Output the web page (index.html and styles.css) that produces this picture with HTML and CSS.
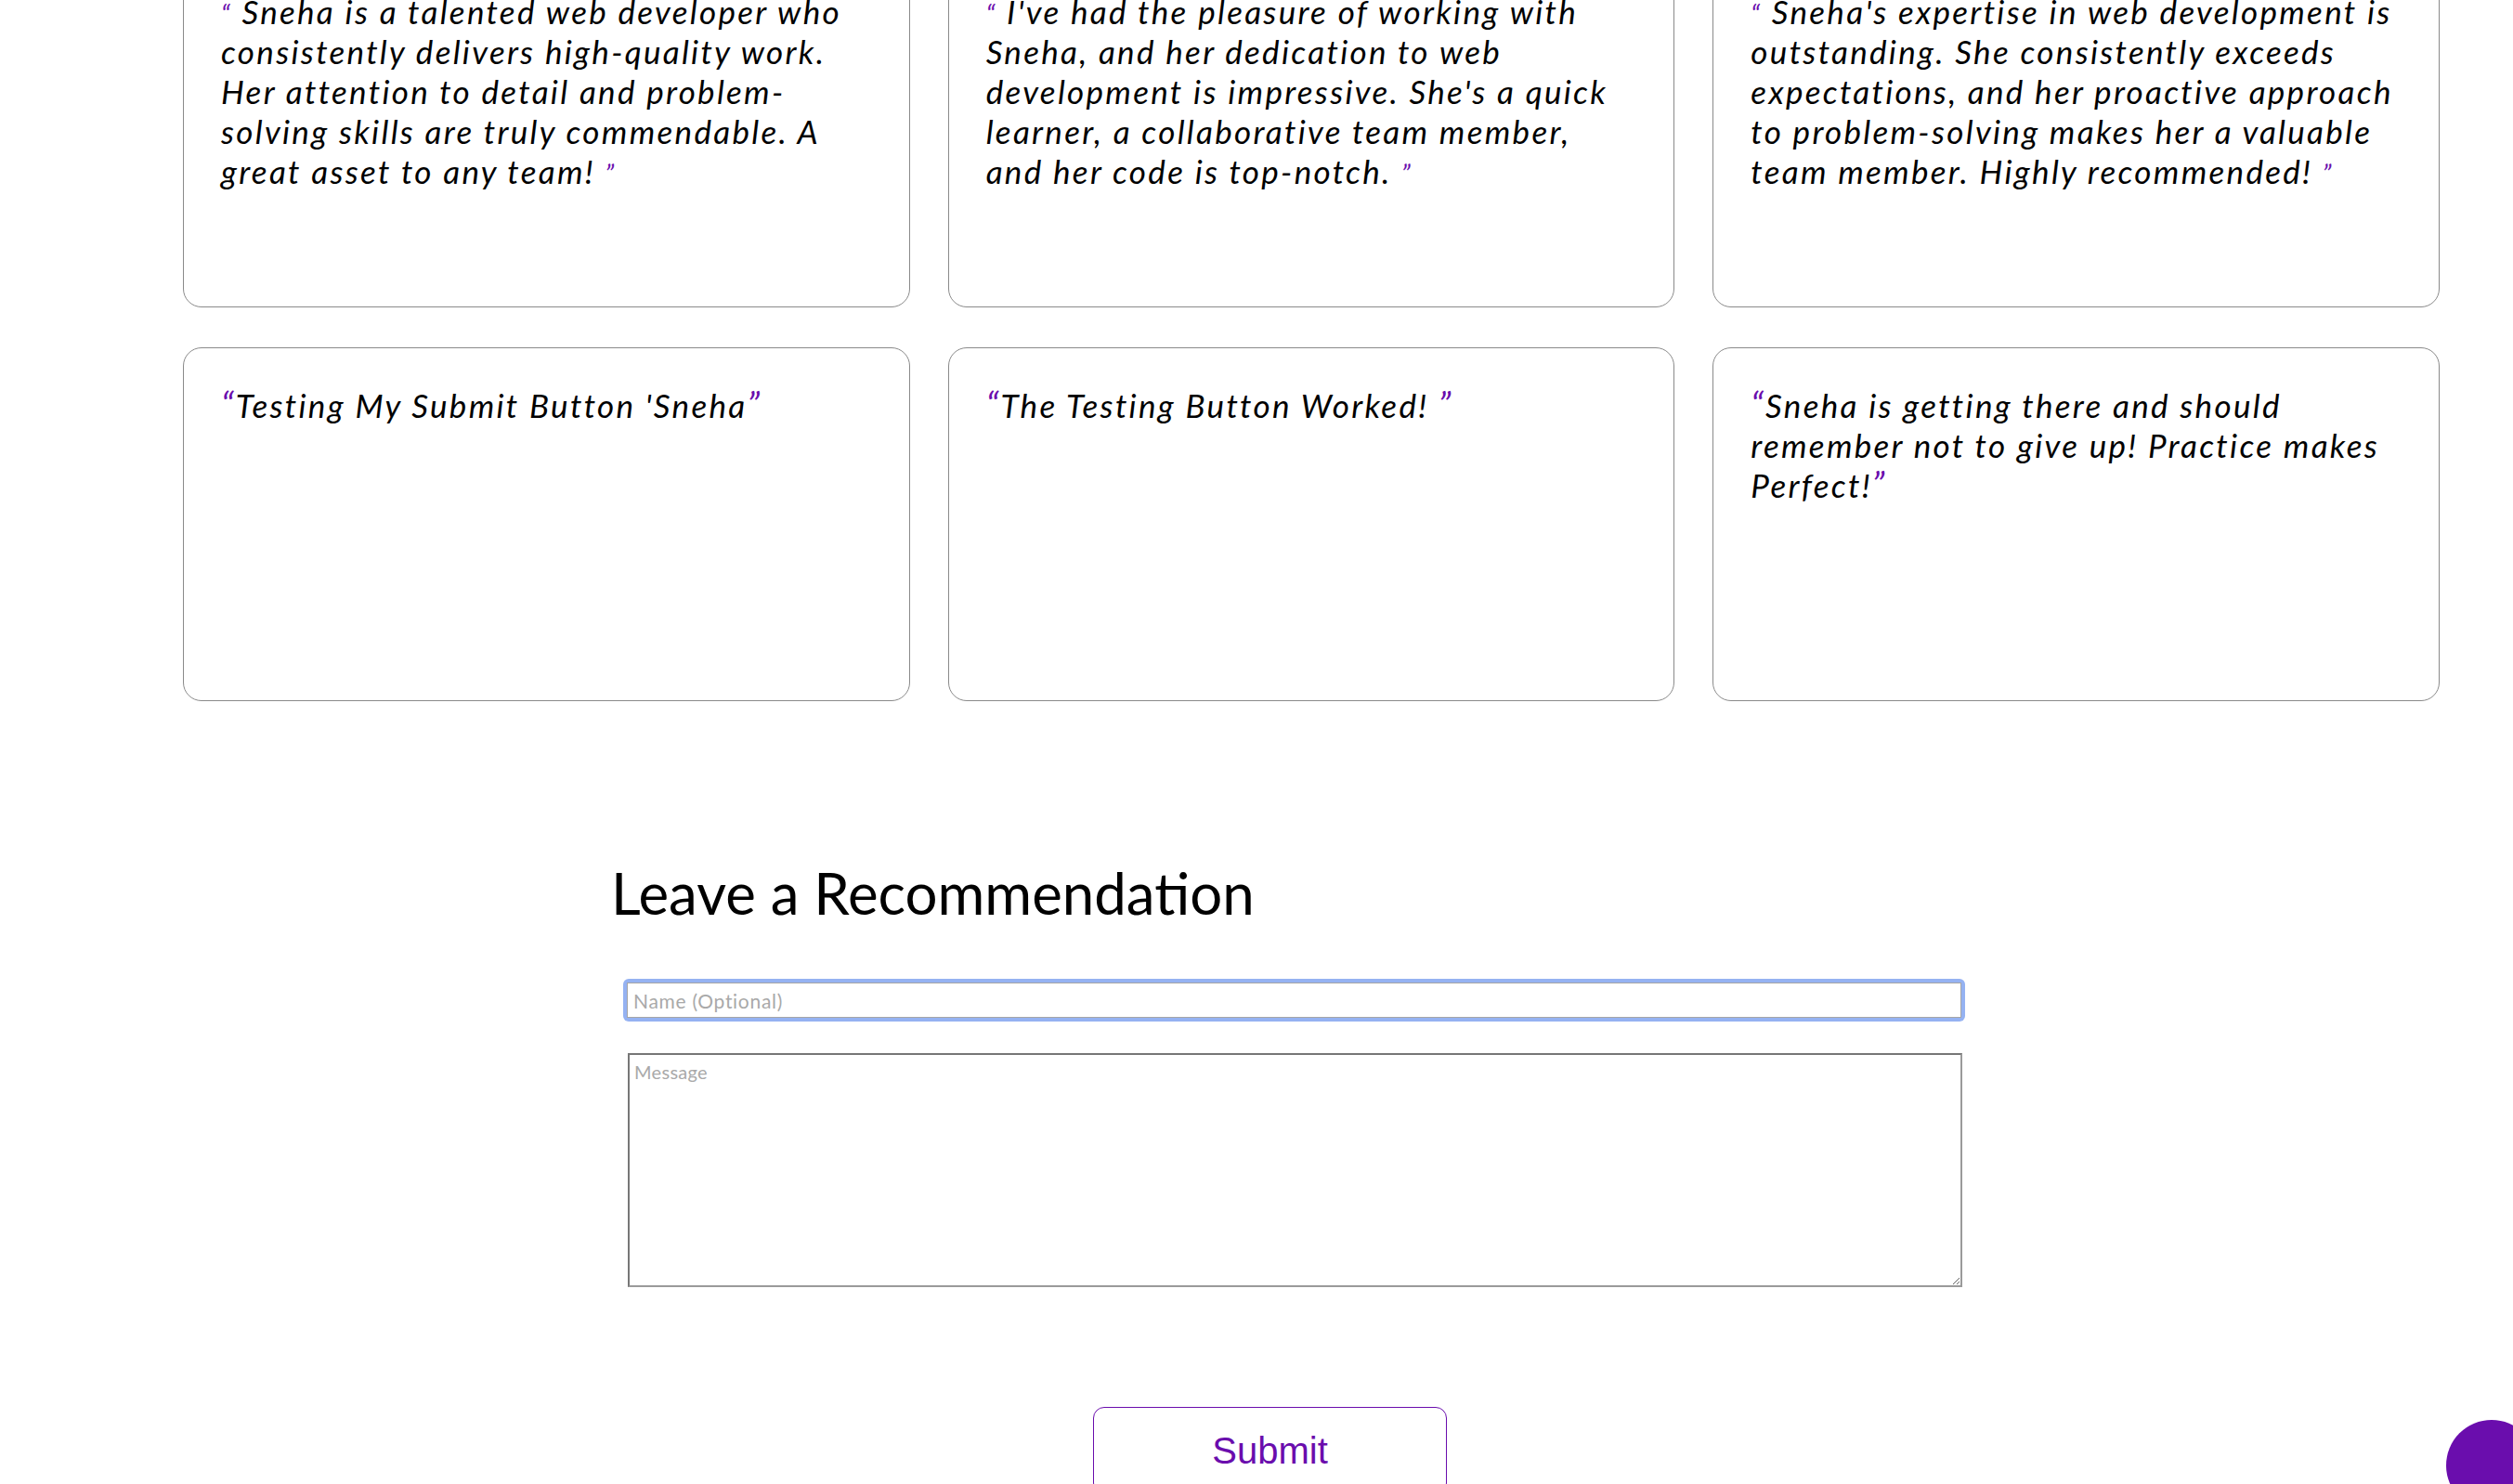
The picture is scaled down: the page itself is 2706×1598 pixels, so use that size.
FILE: index.html
```html
<!DOCTYPE html>
<html lang="en">
<head>
<meta charset="utf-8">
<title>Recommendations</title>
<link rel="stylesheet" href="styles.css">
</head>
<body>
<section class="testimonials">
  <div class="card"><p class="quote-text"><span class="q q-small">“</span> Sneha is a talented web developer who consistently delivers high-quality work. Her attention to detail and problem-solving skills are truly commendable. A great asset to any team! <span class="q q-small">”</span></p></div>
  <div class="card"><p class="quote-text"><span class="q q-small">“</span> I've had the pleasure of working with Sneha, and her dedication to web development is impressive. She's a quick learner, a collaborative team member, and her code is top-notch. <span class="q q-small">”</span></p></div>
  <div class="card"><p class="quote-text"><span class="q q-small">“</span> Sneha's expertise in web development is outstanding. She consistently exceeds expectations, and her proactive approach to problem-solving makes her a valuable team member. Highly recommended! <span class="q q-small">”</span></p></div>
  <div class="card"><p class="quote-text"><span class="q">“</span>Testing My Submit Button 'Sneha<span class="q">”</span></p></div>
  <div class="card"><p class="quote-text"><span class="q">“</span>The Testing Button Worked! <span class="q">”</span></p></div>
  <div class="card"><p class="quote-text"><span class="q">“</span>Sneha is getting there and should remember not to give up! Practice makes Perfect!<span class="q">”</span></p></div>
</section>

<section class="recommend">
  <h2 class="recommend-title">Leave a Recommendation</h2>
  <form class="recommend-form" onsubmit="return false">
    <div class="focus-ring"><input class="field-input" type="text" placeholder="Name (Optional)" autofocus></div>
    <textarea class="field-message" placeholder="Message"></textarea>
    <button class="submit-btn" type="submit">Submit</button>
  </form>
</section>

<a class="to-top" href="#" aria-label="Back to top"></a>
</body>
</html>
```

FILE: styles.css
```css
html {
  overflow: hidden;
}

body {
  margin: 0;
  background: #ffffff;
  color: #000000;
  font-family: Lato, "Open Sans", sans-serif;
}

.testimonials {
  display: grid;
  grid-template-columns: repeat(3, 1fr);
  grid-auto-rows: 381px;
  column-gap: 41px;
  row-gap: 43px;
  width: 2430px;
  margin: -50px 0 0 197px;
}

.card {
  box-sizing: border-box;
  border: 1.5px solid #8a8a8a;
  border-radius: 20px;
  padding: 40px 44px 40px 40px;
  background: #ffffff;
}

.quote-text {
  margin: 0;
  font-family: Lato, "Open Sans", sans-serif;
  font-style: italic;
  font-size: 35px;
  line-height: 43px;
  letter-spacing: 2.3px;
}

.q {
  color: #6a0dad;
  font-size: 1.12em;
  line-height: 0;
}

.q-small {
  font-size: 0.8em;
}

.recommend {
  margin: 168px 0 0 658px;
  width: 1419px;
}

.recommend-title {
  margin: 0;
  font-family: Lato, "Open Sans", sans-serif;
  font-weight: 400;
  font-size: 61.8px;
  line-height: 76px;
}

.recommend-form {
  display: flex;
  flex-direction: column;
  align-items: flex-start;
  margin-top: 55px;
}

.focus-ring {
  margin-left: 13px;
  padding: 4px;
  border-radius: 6px;
  background: #95b2f2;
}

.field-input {
  display: block;
  box-sizing: border-box;
  width: 1437px;
  height: 38px;
  margin: 0;
  padding: 0 6px;
  border: 1px solid #a6a6a6;
  border-radius: 0;
  outline: none;
  background: #ffffff;
  font-family: Lato, "Open Sans", sans-serif;
  font-size: 21px;
  letter-spacing: 0.7px;
  caret-color: #000000;
}

.field-message {
  display: block;
  box-sizing: border-box;
  width: 1437px;
  height: 252px;
  margin: 34px 0 0 18px;
  padding: 6px 5px;
  border: 2px solid;
  border-color: #777777 #9a9a9a #9a9a9a #777777;
  border-radius: 0;
  outline: none;
  font-family: Lato, "Open Sans", sans-serif;
  font-size: 20px;
  line-height: 24px;
  letter-spacing: 0.3px;
  resize: both;
}

.field-input::placeholder,
.field-message::placeholder {
  color: #a9a9a9;
}

.submit-btn {
  align-self: center;
  box-sizing: border-box;
  width: 381px;
  height: 94px;
  margin-top: 129px;
  padding: 0;
  border: 1.5px solid #6a0dad;
  border-radius: 12px;
  background: #ffffff;
  color: #6a0dad;
  font-family: "Liberation Sans", Arial, sans-serif;
  font-size: 40px;
  cursor: pointer;
}

.to-top {
  position: fixed;
  right: -26px;
  bottom: -29px;
  width: 98px;
  height: 98px;
  border-radius: 50%;
  background: #6a0dad;
}
```
